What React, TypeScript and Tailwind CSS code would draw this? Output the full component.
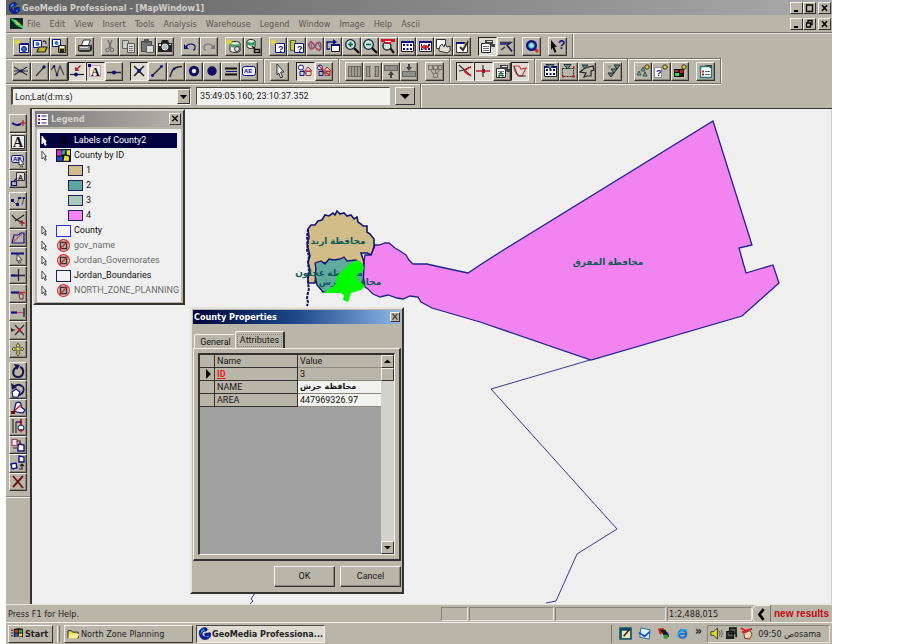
import React from "react";

const NAVY = "#101080";

function line(d: string, stroke = "#333", width = 1.2, fill = "none") {
  return <path d={d} stroke={stroke} strokeWidth={width} fill={fill} />;
}
function fill(d: string, color = "#333") {
  return <path d={d} fill={color} />;
}
const star = fill("M1 1l2 2 0-3 1 3 3-1-2 2 2 2-3-1-1 3-1-3-2 1 1-2z", "#e8dc20");
const page = line("M5.5 5.5h9v9h-9z", NAVY, 1, "#fff");
const gridBox = (
  <>
    {line("M2.5 3.5h12v10h-12z", "#222", 1, "#fff")}
    {fill("M2 3h13v2H2z", NAVY)}
    {fill("M4 6h2v2H4zM7.500 6h2v2h-2zM11 6h2v2h-2zM4 10h2v2H4zM7.500 10h2v2h-2zM11 10h2v2h-2z", NAVY)}
  </>
);
const lens = (
  <>
    {line("M10 10l5 5", "#111", 2.4)}
    <circle cx="6.500" cy="6.500" r="4.800" fill="#cfe6df" stroke="#123" strokeWidth="1.300" />
  </>
);
const bars = line("M2.500 3.500h12v10h-12zM5.500 3v11M8.500 3v11M11.500 3v11", "#6b6961", 1.2, "#a5a298");
const sheet = (
  <>
    {line("M2.500 5.500h9v9h-9z", "#222", 1, "#fff")}
    {fill("M6 2h8v4h2v3h-3l-3-3H6z", "#444")}
    {line("M8 3.500h5", "#ddd", 1)}
    {line("M4 8.500h6M4 10.500h6M4 12.500h6", "#777", 1)}
  </>
);
const shapes = (
  <>
    <circle cx="4" cy="4.500" r="2.500" fill="#fff" stroke={NAVY} />
    {line("M6 7l3 4M3 8.500h4v4H3z", NAVY, 1)}
    {line("M7.500 8l3.500-4 4 4z", "#a33", 1, "#ecd")}
    {line("M9 8.500h5v4H9z", "#a33", 1)}
  </>
);
const tri = "M2 2.500h5l-2.500 4z";

const icons: Record<string, React.ReactNode> = {
  "New workspace": <>{page}{fill("M5 5h10v2H5z", NAVY)}{star}<circle cx="10" cy="11" r="2.500" fill="#2d6fd0" stroke="#111a90" /></>,
  "Open workspace": <>{line("M1.500 2.500h8v7h-8z", NAVY, 1, "#fff")}<circle cx="5.500" cy="6" r="2" fill="#2d6fd0" />{fill("M5 14l2-5h9l-2 5z", "#c3b51b")}{line("M5 14l2-5h8l-2 5zM11 4c2-2 3-1 3 2", "#222")}</>,
  "Save workspace": <>{line("M1.500 1.500h8v7h-8z", NAVY, 1, "#fff")}<circle cx="5.500" cy="5" r="2" fill="#2d6fd0" />{line("M7.500 7.500h7v7h-7z", "#222", 1, "#a79a20")}{fill("M9 11h4v3H9z", "#222")}{fill("M9 8h4v2H9z", "#eee")}</>,
  Print: <>{line("M4.500 7l2-5h7l-2 5", "#333", 1, "#fff")}{line("M1.500 7.500h12v5h-12z", "#222", 1, "#888")}{fill("M3 12h11l-1 2H2z", "#333")}{fill("M14 6l1 1v5l-1 1z", "#333")}{line("M3 9.500h8", "#ddd", 1)}</>,
  Cut: <>{line("M6 2l3 8M10 2l-3 8", "#666", 1.100)}<circle cx="5.500" cy="12" r="1.800" fill="none" stroke="#666" /><circle cx="10" cy="12" r="1.800" fill="none" stroke="#666" /></>,
  Copy: <>{line("M2.500 2.500h6v8h-6z", "#666", 1, "#ccc")}{line("M7.500 5.500h7v9h-7z", "#555", 1, "#ddd")}{line("M9 8.500h4M9 10.500h4M9 12.500h4", "#777", 1)}</>,
  Paste: <>{line("M2.500 3.500h10v10h-10z", "#444", 1, "#777")}{fill("M5 1h5v4H5z", "#555")}{line("M7.500 7.500h7v7h-7z", "#555", 1, "#ddd")}</>,
  Snapshot: <>{fill("M1 5h3l1-3h6l1 3h3v9H1z", "#222")}<circle cx="8" cy="9" r="3" fill="#9fc5c5" stroke="#eee" />{fill("M2 6h2v2H2zM12 6h2v1h-2z", "#ddd")}</>,
  Undo: <>{line("M4 9c3-5 10-3 9 1 0 1-1 2-2 2", NAVY, 1.200)}{fill("M2 6v5h5z", NAVY)}</>,
  Redo: <>{line("M12 9C9 4 2 6 3 10c0 1 1 2 2 2", "#777", 1.200)}{fill("M14 6v5H9z", "#777")}</>,
  "New connection": <>{line("M4 5v8c2 2 9 2 10 0V5c-2-2-8-2-10 0z", "#222", 1, "#e9efe4")}{fill("M4 5c2 2 8 2 10 0v3c-2 2-8 2-10 0z", "#48a070")}{star}<circle cx="11" cy="11" r="2.500" fill="#ddd" stroke="#333" /></>,
  "Edit connection": <>{line("M2 3v6c2 2 7 2 8 0V3C8 1 4 1 2 3z", "#222", 1, "#e9efe4")}{fill("M2 3c2 2 6 2 8 0v3c-2 2-6 2-8 0z", "#2f9a67")}{line("M7 8l3 3M9.500 11.500h5v3h-5z", "#111", 1.500, "#bbb")}</>,
  "New query": <>{page}{star}<text x="8" y="14" fontSize="9" fontWeight="700" fill={NAVY}>?</text></>,
  "Edit query": <>{line("M1.500 2.500h5v10h-5z", "#487020", 1.200, "#cfc84a")}{page}<text x="8" y="14" fontSize="9" fontWeight="700" fill={NAVY}>?</text></>,
  Relate: <>{line("M8 8C4 2 1 5 2 8s3 5 6 0 6-5 6 0-3 6-6 0zM3 3l4 3M9 10l4 3", "#a04468", 1.500)}{line("M4 6l1 4M11 5l2 4", "#557", 1)}</>,
  "Copy window": <>{line("M6.500 6.500h8v7h-8z", "#111", 1, "#fff")}{fill("M6 6h9v2H6z", NAVY)}{line("M5 11H2V4h8", NAVY, 1.300)}{fill("M8 1l4 3-4 3z", NAVY)}</>,
  "Zoom in": <>{lens}{line("M6.500 4v5M4 6.500h5", "#0b6055", 1.600)}</>,
  "Zoom out": <>{lens}{line("M4 6.500h5", "#0b6055", 1.600)}</>,
  "Zoom to rectangle": <>{line("M10 10l4 5", "#111", 2.200)}<circle cx="7" cy="8" r="4" fill="#cfe6df" stroke="#123" strokeWidth="1.300" />{fill("M1 1h14v3h-4v2H5V4H1z", "#d31526")}{line("M5 3.500h6", "#fff", 1)}</>,
  "Fit all": gridBox,
  "Fit selected": <>{gridBox}{fill("M5 6h6v5H5z", "#fff")}{fill("M6 7h4v1h2v2h-2v1H6v-1H4V8h2z", "#e01e2b")}</>,
  Pan: <>{line("M1.500 1.500h9v9h-9z", "#333", 1, "#fff")}{line("M4 13c0-3 1-6 3-7l2 3 1-3 2 3 3-1v5l-3 2z", "#333", 1, "#e3e0d6")}</>,
  "Display scale": <>{line("M2.500 4.500h11v10h-11z", "#333", 1, "#fff")}{fill("M2 4h12v2H2z", NAVY)}{line("M6 9l3 3 5-9", "#333", 2)}{line("M8 10l5-7", "#d8d23a", 1)}</>,
  "Legend window": sheet,
  "North arrow": <>{line("M2 4.500h11l-4 3 5 6M3 12l4-3", "#333", 1.400)}{line("M2 6h9", NAVY, 1.400)}{line("M10 8l4 5", NAVY, 1.200)}</>,
  "Web search": <>{line("M10 10l4 4", "#e02525", 3)}<circle cx="7.500" cy="7.500" r="5.500" fill={NAVY} /><circle cx="7.500" cy="7.500" r="3" fill="#9be0e0" stroke="#187a9a" /></>,
  "Context help": <>{fill("M1 2l6 7H4.500l2 5-2 .7-2-4.700-1.500 2z", "#111")}<text x="8" y="11" fontSize="12" fontWeight="700" fill={NAVY}>?</text></>,

  "Snap to intersection": <>{line("M1 4l13 8M1 12l13-8M1 8h14", "#333", 1.100)}<circle cx="8" cy="8" r="1.600" fill={NAVY} /></>,
  "Snap to end": <>{line("M4 13l8-9", "#333")}<circle cx="12" cy="4" r="1.700" fill={NAVY} /></>,
  "Snap to vertex": <>{line("M1 7l3-4 3 9 3-9 4 9", "#444")}<circle cx="4" cy="3.500" r="1.300" fill={NAVY} /><circle cx="7" cy="12" r="1.300" fill={NAVY} /></>,
  "Snap to element": <>{line("M1 11.500h14", "#222")}<circle cx="7" cy="11.500" r="2" fill={NAVY} />{fill("M6 8V4l2 1 3-3 1 1-3 3 1 2z", "#b8202b")}</>,
  "Snap to text": <>{line("M2.500 2.500h11v11h-11z", "#c9a", 1, "#f2e7e4")}<text x="4" y="13" fontSize="12" fontWeight="700" fontFamily="Liberation Serif" fill="#111">A</text>{fill("M1 1h3v3H1z", NAVY)}</>,
  "Snap to midpoint": <>{line("M1 9.500h14", "#222", 1.500)}<circle cx="8" cy="9.500" r="2" fill={NAVY} /></>,
  "Insert point": <>{line("M3 3l10 10M13 3L3 13", "#222", 1.600)}<circle cx="8" cy="8" r="2" fill={NAVY} /></>,
  "Insert line": <>{line("M3 13l9-9", "#222", 1.400)}<circle cx="3.500" cy="12.500" r="1.400" fill={NAVY} /><circle cx="12.500" cy="3.500" r="1.400" fill={NAVY} /></>,
  "Insert arc": <>{line("M2 14C4 6 6 4 14 3.500", "#222", 1.500)}<circle cx="6" cy="6" r="1.300" fill={NAVY} /></>,
  "Insert hole": <circle cx="8" cy="8" r="3.700" fill="#e6e6ee" stroke="#101060" strokeWidth="3" />,
  "Insert area": <circle cx="8" cy="8" r="4.700" fill="#101060" />,
  "Insert parallel": <>{line("M2 5.500h12M2 11.500h12", "#111", 2.200)}{line("M3 8.500h11", NAVY, 1)}</>,
  "Insert label": <><rect x="1.500" y="3.500" width="13" height="9" rx="2" fill="#eef" stroke={NAVY} /><text x="3" y="10" fontSize="6" fontWeight="700" fill={NAVY}>AE</text></>,
  "Select tool": <path d="M5 1l7 8H8.700l2 5-2 .9-2-5L5 12z" fill="#eee" stroke="#333" />,
  "Select by shape": shapes,
  "Select inside": <>{shapes}{line("M3 3l4 4M9 9l5 3", "#b22", 1.300)}</>,
  "Merge columns": bars,
  "Split columns": <>{bars}{fill("M7 2h3v13H7z", "#bab5a9")}</>,
  "Move down": <>{fill("M1 2h14v6H1z", "#66645d")}{line("M2 4h12M2 6h12", "#bbb", 1)}{fill("M8 8l3 4H9v3H7v-3H5z", "#444")}</>,
  "Move up": <>{fill("M1 8h14v6H1z", "#66645d")}{line("M2 10h12M2 12h12", "#bbb", 1)}{fill("M7 1h2v3h2L8 8 5 4h2z", "#444")}</>,
  Combine: <>{line("M1.500 2.500h4v4h-4zM6.500 2.500h4v4h-4zM11.500 2.500h3v4h-3zM6.500 10.500h4v4h-4zM3.500 7l3 4M12.500 7l-3 4M8.500 7v3", "#77756d", 1.100)}</>,
  "Break line": <>{line("M2 2l12 11M2 8c5 0 8-3 12-4", "#333", 1.200)}{line("M14 4c-4 1-7 4-6 5s4 3 6 3", "#d31526", 1.600)}</>,
  Intersect: <>{line("M1 8h14", "#c01020", 1.400)}{line("M8 2v12", "#333", 1.200)}{fill("M7 6h3v4H7z", "#a01030")}</>,
  "Legend properties": <>{sheet}<text x="4" y="14" fontSize="8" fontWeight="700" fill="#116a44">A</text></>,
  Coincident: <>{line("M2 3h5l2 3 5-1-4 8H6L3 8z", "#d33540", 1.200)}{line("M2 3l3 8 3 2h6", "#333", 1)}</>,
  "Fit view": <>{gridBox}{line("M4 1.500h8L8 6z", "#234", 1, "#6b8478")}</>,
  "Place fence": <><path d="M2.500 5.500h11v8h-11z" fill="none" stroke="#222" strokeDasharray="2 1" />{line("M2 13.500h2M13 4.500h2M12 13.500h3", "#d31526", 2)}{line("M4 1.500h7L7.500 6z", "#234", 1, "#6b8478")}</>,
  "Place polygon": <>{line("M1 9l5-4 8-2 1 4-3 1v5H8l-3 1 2-4z", "#222")}{line("M3 2h6L6 6z", "#234", 1, "#6b8478")}</>,
  "Filter set": <>{fill(tri, "#8d9a92")}{line("M9 2h6l-3 4zM6 6h6l-3 4zM3 10h6l-3 4z", "#223", 1, "#6b8478")}</>,
  "Add points": <>{line("M2 12l2-4 2 4zM8 13l2-4 2 4zM6 8l2-4 2 4z", "#265843", 1, "#8aa")}<circle cx="12" cy="4" r="2.200" fill="#d8cc20" stroke="#333" /></>,
  "Add query": <>{line("M1.500 4.500h7v10h-7z", "#88a", 1, "#fff")}<text x="3" y="13" fontSize="9" fontWeight="700" fill={NAVY}>?</text><circle cx="12" cy="4" r="2.200" fill="#d8cc20" stroke="#333" /></>,
  "Add thematic": <>{fill("M2 6h10v8H2z", "#111")}{fill("M3 10h4v3H3z", "#30e040")}{fill("M8 7h3v3H8z", "#d31526")}{fill("M3 7h3v2H3z", "#a33")}<circle cx="12" cy="4" r="2.200" fill="#d8cc20" stroke="#333" /></>,
  "Data window": <>{line("M2.500 3.500h11v11h-11z", "#1d7d7d", 1.400, "#fff")}{fill("M6 2h8v4l-3-2z", "#444")}{line("M4 8.500h2M4 11.500h2", "#d31526", 2)}{line("M7 8.500h5M7 11.500h5", "#666", 1)}</>,

  "Redigitize": <>{line("M2 8c4 3 7 2 9 1", NAVY, 2)}{line("M13 5v6M10 8h6", "#b01525", 1.200)}</>,
  "Text mode": <>{line("M1.500 1.500h13v13h-13z", "#333", 1, "#eee")}<text x="3" y="13" fontSize="14" fontWeight="700" fontFamily="Liberation Serif" fill="#111">A</text></>,
  "Label mode": <><rect x="1.500" y="3.500" width="12" height="7" rx="2" fill="#dde" stroke={NAVY} /><text x="3" y="9" fontSize="6" fontWeight="700" fill={NAVY}>AB</text><path d="M9 6l5 6h-2.500l1 3h-2l-.5-3-1 1z" fill="#fff" stroke="#222" strokeWidth=".8" /></>,
  "Leader label": <>{line("M6.500 1.500h8v8h-8z", "#333", 1, "#ddd")}<text x="8" y="8.500" fontSize="7" fontWeight="700" fill="#222">A</text>{line("M1.500 10.500h5v4h-5zM4 10l3-3", NAVY, 1.200)}</>,
  "Edit geometry": <>{line("M2 7l5 5 2-7h5l-2 7", "#555", 1)}{fill("M1 6h3v3H1zM6 10h3v3H6zM8 4h3v2H8zM13 4h2v2h-2z", NAVY)}</>,
  "Continue geometry": <>{line("M2 3c2 4 6 6 12 8M14 3L5 9", "#222", 1.300)}{line("M12 8v6M9 11h6", "#b01525", 1.200)}</>,
  "Reshape": <>{line("M2 13l2-8h4l3-2h3v10z", NAVY, 1.200)}{line("M3 12l9-8", "#c46080", 1.600)}</>,
  "Move vertex": <>{line("M1 4.500h13", NAVY, 2)}<path d="M7 5l5 6H9.500l1 3h-2l-.5-3-1 1z" fill="#eee" stroke="#222" strokeWidth=".8" /></>,
  "Split": <>{line("M1 8.500h14M8.500 2v12", "#223", 1.300)}{line("M1 8.500h6", NAVY, 2)}</>,
  "Trim": <>{line("M1 7.500h8", NAVY, 2.200)}{line("M9 7.500h6", "#c02030", 1.500)}<path d="M9 9h4v5h-3z" fill="#dcc" stroke="#622" /></>,
  "Extend": <>{line("M1 8.500h6", NAVY, 2.200)}{line("M7 8.500h6", "#c05060", 1.200)}{line("M14 4v9", "#222", 1.400)}</>,
  "Break": <>{line("M5 3l9 10M14 3L5 13M1 8h4", "#333", 1.200)}<circle cx="9.500" cy="8" r="1.800" fill="#d31526" />{fill("M1 6l3 2-3 2z", "#222")}</>,
  "Move": <path d="M8 2l2 3H9v2h3V6l2 2-2 2V9H9v3h1l-2 3-2-3h1V9H4v1L2 8l2-2v1h3V5H6z" fill="#e4de4c" stroke="#444" strokeWidth=".9" />,
  "Rotate": <>{line("M10 4c5 2 4 10-2 10-6 0-6-7-2-9.500", "#161650", 2)}{fill("M4 1l6 1-3 5z", "#161650")}</>,
  "Spin": <>{line("M4 5c5-5 12 0 9 5-1 2-3 3-5 3", "#161650", 1.800)}{fill("M1 1l1 7 5-3z", "#161650")}{line("M2 10l4-3 4 3-2 5H3z", NAVY, 1.200, "#fff")}</>,
  "Delete part": <>{line("M4 11l2-8c4-2 6 0 5 4l4 3-2 3-6-1z", NAVY, 1.200, "#eef")}{line("M3 12l8-7", "#d31526", 1.400)}{fill("M1 11h4v3H1z", "#611")}</>,
  "Align": <>{line("M3 1v14M6 4v11", "#333", 1.200)}{line("M11 1v9", "#c01525", 2)}{line("M6 4h5", NAVY, 1.200)}<circle cx="11" cy="10" r="3" fill="#dfe" stroke={NAVY} />{fill("M9 11h4l-2 4z", "#b22")}</>,
  "Copy geometry": <>{line("M2 2.500h5v6H2z", "#946", 1.200, "#fde")}{line("M9 7l5 1v6H8V9z", NAVY, 1.400, "#fff")}{line("M7 4h3v3M3 11h4", "#222", 1.200)}</>,
  "Paste geometry": <>{line("M9 1l5 1v5H9zM1 9l5-1 1 5-5 1z", NAVY, 1.400, "#fff")}{line("M9 14h3v-4M10 11l2-2 2 2", "#222", 1.200)}</>,
  "Delete": line("M3 2l10 12M13 2L3 13", "#6e1418", 1.900),
};

const bevel = "border border-t-[#f4f2ec] border-l-[#f4f2ec] border-r-[#33322e] border-b-[#33322e]";
const sunken = "border border-t-[#4a4943] border-l-[#4a4943] border-r-[#f4f2ec] border-b-[#f4f2ec]";
const ui = "font-['DejaVu_Sans_Condensed','DejaVu_Sans',sans-serif]";
const narrow = "font-['Roboto','Liberation_Sans',sans-serif]";

const pressed = new Set(["Snap to element", "Snap to text", "Insert point", "Legend window", "Select by shape", "Break line", "Intersect", "Coincident"]);

function ToolButton({ name, tall = false }: { name: string; tall?: boolean }) {
  const isPressed = pressed.has(name);
  const look = isPressed
    ? "border border-t-[#22211e] border-l-[#22211e] border-r-[#f4f2ec] border-b-[#f4f2ec] bg-[#dedbd3]"
    : `${bevel} shadow-[inset_-1px_-1px_0_#8b877d]`;
  return (
    <button type="button" aria-label={name} className={`flex min-h-0 min-w-0 flex-1 items-center justify-center overflow-hidden ${tall ? "w-[18px]" : "h-[19px]"} ${look}`}>
      <svg viewBox="0 0 16 16" className="size-[16px] shrink-0" fontFamily="Liberation Sans">{icons[name]}</svg>
    </button>
  );
}

type Group = { width: string; items: string[] };

function Band({ groups, first = false }: { groups: Group[]; first?: boolean }) {
  return (
    <div className={`flex items-center gap-[7px] border-r border-r-[#716e66] pr-[5px] shadow-[1px_0_0_#f4f2ec] ${first ? "pl-[7px]" : "pl-[6px]"}`}>
      {groups.map((g) => (
        <div key={g.items[0]} className={`flex ${g.width}`}>
          {g.items.map((n) => <ToolButton key={n} name={n} />)}
        </div>
      ))}
    </div>
  );
}

const standard: Group[] = [
  { width: "w-[55px]", items: ["New workspace", "Open workspace", "Save workspace"] },
  { width: "w-[19px]", items: ["Print"] },
  { width: "w-[73px]", items: ["Cut", "Copy", "Paste", "Snapshot"] },
  { width: "w-[37px]", items: ["Undo", "Redo"] },
  { width: "w-[37px]", items: ["New connection", "Edit connection"] },
  { width: "w-[202px]", items: ["New query", "Edit query", "Relate", "Copy window", "Zoom in", "Zoom out", "Zoom to rectangle", "Fit all", "Fit selected", "Pan", "Display scale"] },
  { width: "w-[37px]", items: ["Legend window", "North arrow"] },
  { width: "w-[19px]", items: ["Web search"] },
  { width: "w-[19px]", items: ["Context help"] },
];

const bands: Group[][] = [
  [
    { width: "w-[111px]", items: ["Snap to intersection", "Snap to end", "Snap to vertex", "Snap to element", "Snap to text", "Snap to midpoint"] },
    { width: "w-[128px]", items: ["Insert point", "Insert line", "Insert arc", "Insert hole", "Insert area", "Insert parallel", "Insert label"] },
  ],
  [
    { width: "w-[19px]", items: ["Select tool"] },
    { width: "w-[37px]", items: ["Select by shape", "Select inside"] },
  ],
  [
    { width: "w-[73px]", items: ["Merge columns", "Split columns", "Move down", "Move up"] },
    { width: "w-[19px]", items: ["Combine"] },
  ],
  [{ width: "w-[73px]", items: ["Break line", "Intersect", "Legend properties", "Coincident"] }],
  [
    { width: "w-[55px]", items: ["Fit view", "Place fence", "Place polygon"] },
    { width: "w-[19px]", items: ["Filter set"] },
  ],
  [
    { width: "w-[55px]", items: ["Add points", "Add query", "Add thematic"] },
    { width: "w-[19px]", items: ["Data window"] },
  ],
];

const menus = ["File", "Edit", "View", "Insert", "Tools", "Analysis", "Warehouse", "Legend", "Window", "Image", "Help", "Ascii"];

function WindowButtons({ restore = false }: { restore?: boolean }) {
  const cls = `h-[12px] w-[13px] bg-[#bab5a9] ${bevel}`;
  return (
    <div className="ml-auto flex pr-[1px]">
      <button type="button" aria-label="Minimize" className={cls}><svg viewBox="0 0 11 10">{fill("M3 7h4v2H3z", "#000")}</svg></button>
      <button type="button" aria-label={restore ? "Restore" : "Maximize"} className={cls}>
        <svg viewBox="0 0 11 10">{restore ? line("M4 3.500V1.500h4v4H6.500M2.500 4h4v4h-4z", "#000", 1.300) : line("M2.500 2h6v6.500h-6zM2 2h7", "#000", 1.300)}</svg>
      </button>
      <button type="button" aria-label="Close" className={`ml-[2px] ${cls}`}><svg viewBox="0 0 11 10">{line("M3 2l5 6M8 2L3 8", "#000", 1.500)}</svg></button>
    </div>
  );
}

function GeoLogo({ className }: { className: string }) {
  return (
    <svg viewBox="0 0 16 16" className={className} aria-hidden="true">
      <path d="M10 1C4 0 0 5 2 10c1 5 7 7 11 4 3-2 3-5 2-7l-7 1 1 3h2c-2 2-5 1-6-2 0-3 2-4 5-4l2-2z" fill="#0d1bb8" stroke="#06083f" strokeWidth=".8" />
      <path d="M4 4l3-2 1 2-3 2-2 4zM10 12l3-2v3z" fill="#28a4e8" />
    </svg>
  );
}

const verticalTools = [
  { height: "h-[74px]", items: ["Redigitize", "Text mode", "Label mode", "Leader label"] },
  { height: "h-[166px]", items: ["Edit geometry", "Continue geometry", "Reshape", "Move vertex", "Split", "Trim", "Extend", "Break", "Move"] },
  { height: "h-[129px]", items: ["Rotate", "Spin", "Delete part", "Align", "Copy geometry", "Paste geometry", "Delete"] },
];

function MapCanvas() {
  const label = { fill: "#0d5a56", fontSize: 9, fontWeight: 700, fontFamily: "'Liberation Sans','DejaVu Sans',sans-serif", textAnchor: "middle" as const };
  return (
    <svg viewBox="32 109 800 495" className="absolute top-0 left-0 h-[495px] w-[800px]" role="img" aria-label="Map of Jordan counties">
      <g fill="none" stroke="#3a3a90" strokeWidth="1">
        <path d="M590 360L491 389 617 529 577 554 556 601 546 603" />
        <path d="M255 593L251 599 253 601 250 604" />
      </g>
      <path d="M374 245L379 245 385 243 389 243 395 248 400 251 406 255 409 260 413 264 427 264 440 267 468 273 480 265 505 249 713 121 752 245 739 248 746 273 773 265 779 283 742 316 591 360 480 322 432 308 421 302 418 297 410 296 403 299 397 298 388 295 380 297 373 294 368 289 365 287 363 275 364 262 365 255 370 255 374 248Z" fill="#f184f1" stroke="#22228c" strokeWidth="1.300" />
      <path d="M308 229L311 225 315 225 318 221 322 220 325 215 329 216 333 213 335 215 337 211 340 214 344 213 347 216 351 215 354 219 357 217 358 222 361 224 363 226 367 226 367 232 370 234 374 239 374 247 371 255 367 253 361 253 364 262 363 270 346 272 330 262 316 264 316 274 315 283 308 283 308 278 310 270 308 262 310 256 308 248 307 243 309 238Z" fill="#d2bd88" stroke="#151570" strokeWidth="1.600" />
      <path d="M315 263L321 261 325 264 329 259 334 260 340 259 344 257 347 261 356 260 364 266 363 285 350 292 323 292 317 285 315 275 316 269Z" fill="#61aaa2" stroke="#151570" strokeWidth="1.300" />
      <path d="M308 229l-1 8 1 6-1 7 2 6-1 7 1 7-1 7 0 7 1 4-1 5-1 5 1 4-1 4" fill="none" stroke="#151570" strokeWidth="2" strokeDasharray="3 1" />
      <g {...label}>
        <text x="338" y="244">محافظة اربد</text>
        <text x="329" y="276">محافظة عجلون</text>
        <text x="350" y="285">محافظة جرش</text>
        <text x="608" y="265">محافظة المفرق</text>
      </g>
      <path d="M323 293L335 285 337 276 348 265 357 260 363 264 364 269 357 275 358 280 365 286 361 290 351 293 348 302 343 300 344 295 340 293Z" fill="#00fb00" />
    </svg>
  );
}

type Row = { text: string; kind: "labels" | "theme" | "blue" | "navy" | "hidden" | "swatch"; color?: string };
const legend: Row[] = [
  { text: "Labels of County2", kind: "labels" },
  { text: "County by ID", kind: "theme" },
  { text: "1", kind: "swatch", color: "bg-[#d2bd88]" },
  { text: "2", kind: "swatch", color: "bg-[#5aa79d]" },
  { text: "3", kind: "swatch", color: "bg-[#a9cbbd]" },
  { text: "4", kind: "swatch", color: "bg-[#f184f1]" },
  { text: "County", kind: "blue" },
  { text: "gov_name", kind: "hidden" },
  { text: "Jordan_Governorates", kind: "hidden" },
  { text: "Jordan_Boundaries", kind: "navy" },
  { text: "NORTH_ZONE_PLANNING", kind: "hidden" },
];

function LegendSymbol({ kind }: { kind: Row["kind"] }) {
  if (kind === "blue") return <span className="h-[12px] w-[15px] shrink-0 border border-[#2a2ae0] bg-[#f6f6fc]" />;
  if (kind === "navy") return <span className="h-[12px] w-[15px] shrink-0 border border-[#20205c] bg-[#f4f4f6]" />;
  return (
    <svg viewBox="0 0 14 12" className="h-[13px] w-[15px] shrink-0 overflow-visible">
      {kind === "labels" && line("M3 11l4-9 4 9M4.500 8h5", "#000", 1.200)}
      {kind === "theme" && (
        <>
          {fill("M0 0h14v12H0z", "#111")}
          {fill("M1 1h4v5H1z", "#e32bc0")}{fill("M6 1h3l-1 4H5z", "#19b0b0")}{fill("M10 1h3v5l-3-1z", "#f0e428")}
          {fill("M1 7h5v4H1z", "#2740e0")}{fill("M8 6l4 1v4H7z", "#f0e428")}
        </>
      )}
      {kind === "hidden" && (
        <>
          {line("M4 3h6v6H4z", "#333", 1.300, "#aaa")}
          <circle cx="7" cy="6" r="5.500" fill="none" stroke="#e02020" strokeWidth="1.100" />
          {line("M3.500 9.500l7-7", "#e02020", 1.100)}
        </>
      )}
    </svg>
  );
}

function LegendWindow() {
  return (
    <section aria-label="Legend" className={`absolute top-0 left-[1px] w-[152px] border-2 border-t-[#d9d6cd] border-l-[#d9d6cd] border-r-[#33322e] border-b-[#33322e] bg-[#bab5a9] text-[9px] leading-[15px] ${narrow}`}>
      <header className="flex h-[16px] items-center bg-linear-to-r from-[#7b7b7b] to-[#b5b3ad] px-[2px]">
        <svg viewBox="0 0 11 11" className="mr-[3px] size-[11px]">
          {fill("M0 0h11v11H0z", "#fff")}{fill("M1 1h2v2H1zM1 8h2v2H1z", "#22c")}{fill("M1 4.500h2v2H1z", "#d22")}{line("M4.500 2h5M4.500 5.500h5M4.500 9h5", "#226", 1.200)}
        </svg>
        <h2 className={`${ui} text-[9px] font-bold text-[#d5d3cd]`}>Legend</h2>
        <button type="button" aria-label="Close legend" className={`ml-auto h-[12px] w-[12px] bg-[#bab5a9] ${bevel}`}><svg viewBox="0 0 11 10">{line("M2.500 2l6 6M8.500 2l-6 6", "#000", 1.400)}</svg></button>
      </header>
      <ul className="mx-[2px] mt-[2px] mb-[1px] bg-[#efefef] pt-[4px] pr-[4px] pb-[4px] pl-[3px]">
        {legend.map((r) =>
          r.kind === "swatch" ? (
            <li key={r.text} className="flex h-[15px] items-center gap-[3px] pl-[28px] text-[#111]">
              <span className={`h-[11px] w-[15px] border border-[#20205c] ${r.color}`} />{r.text}
            </li>
          ) : (
            <li key={r.text} className={`flex h-[15px] items-center pl-[1px] ${r.kind === "labels" ? "bg-[#020242] text-white" : r.kind === "hidden" ? "text-[#6c6c6c]" : "text-[#111]"}`}>
              <svg viewBox="0 0 8 12" className="mr-[8px] h-[11px] w-[7px] shrink-0">
                <path d="M1 1l5 6H4.500l1.500 4-1.500.5L3 8 1 10z" fill={r.kind === "labels" ? "#fff" : "#eee"} stroke={r.kind === "labels" ? "#fff" : "#222"} strokeWidth=".9" />
              </svg>
              <LegendSymbol kind={r.kind} />
              <span className="ml-[3px] whitespace-nowrap">{r.text}</span>
            </li>
          )
        )}
      </ul>
    </section>
  );
}

function PropertiesDialog() {
  const name = "border-r border-b border-[#33322e] pl-[2px] text-left font-normal";
  const value = "border-b border-[#8b887f] pl-[2px] text-left font-normal";
  const handle = "border-r border-b border-[#33322e]";
  const dialogButton = `h-[21px] w-[61px] ${bevel} shadow-[inset_-1px_-1px_0_#8b877d]`;
  return (
    <section role="dialog" aria-label="County Properties" className={`absolute top-[198px] left-[158px] flex h-[287px] w-[214px] flex-col border-2 border-t-[#e6e3db] border-l-[#e6e3db] border-r-[#33322e] border-b-[#33322e] bg-[#bab5a9] p-[1px] text-[9px] leading-[12px] text-[#151515] ${narrow}`}>
      <header className="flex h-[14px] items-center bg-linear-to-r from-[#04043c] via-[#1d4a8c] to-[#8ebbe8] pr-[1px] pl-[1px]">
        <h2 className={`${ui} text-[9px] font-bold text-white`}>County Properties</h2>
        <button type="button" aria-label="Close dialog" className={`ml-auto h-[10px] w-[10px] bg-[#bab5a9] ${bevel}`}><svg viewBox="0 0 11 10">{line("M2 1l7 8M9 1L2 9", "#333", 1.600)}</svg></button>
      </header>
      <div role="tablist" className="flex h-[24px] items-end pl-[1px]">
        <button type="button" role="tab" aria-selected="false" className="h-[14px] w-[41px] rounded-t-[2px] border border-b-0 border-[#f4f2ec] border-r-transparent pl-[2px]">General</button>
        <button type="button" role="tab" aria-selected="true" className="flex h-[17px] w-[50px] items-center justify-center rounded-t-[2px] border border-r-2 border-b-0 border-t-[#f4f2ec] border-l-[#f4f2ec] border-r-[#33322e]"><span className="border border-dotted border-[#8b887f] px-[2px] leading-[11px]">Attributes</span></button>
      </div>
      <div className="flex h-[213px] border border-t-[#f4f2ec] border-l-[#f4f2ec] border-r-2 border-b-2 border-r-[#33322e] border-b-[#33322e] p-[4px]">
        <div className="flex w-full border border-t-2 border-l-2 border-t-[#33322e] border-l-[#33322e] border-r-[#f4f2ec] border-b-[#f4f2ec] bg-[#a1a1a1]">
          <div className="flex-1">
            <table className="w-full table-fixed border-separate border-spacing-0 bg-[#bab5a9]">
              <colgroup><col className="w-[15px]" /><col className="w-[83px]" /><col /></colgroup>
              <thead>
                <tr className="h-[13px]"><th className={handle} aria-label="Row marker" /><th className={name}>Name</th><th className={value}>Value</th></tr>
              </thead>
              <tbody>
                <tr className="h-[13px]">
                  <td className={handle}><svg viewBox="0 0 14 10" className="h-[10px] w-[14px]">{fill("M6 0l5 5-5 5z", "#000")}</svg></td>
                  <td className={`${name} font-bold text-[#e81c1c] underline`}><b>ID</b></td><td className={value}>3</td>
                </tr>
                <tr className="h-[13px]"><td className={handle} /><td className={name}>NAME</td><td className={`${value} bg-[#f2f2f0] font-['DejaVu_Sans',sans-serif] text-[8px]`}><b>محافظة جرش</b></td></tr>
                <tr className="h-[13px]"><td className={handle} /><td className={name}>AREA</td><td className={`${value} bg-[#f2f2f0]`}>447969326.97</td></tr>
              </tbody>
            </table>
          </div>
          <div className="flex w-[13px] flex-col bg-[#d3d1cb]">
            <button type="button" aria-label="Scroll up" className={`h-[13px] bg-[#bab5a9] ${bevel}`}><svg viewBox="0 0 11 11">{fill("M2 7h7L5.500 3.500z", "#000")}</svg></button>
            <span className={`h-[13px] bg-[#bab5a9] ${bevel}`} />
            <button type="button" aria-label="Scroll down" className={`mt-auto h-[13px] bg-[#bab5a9] ${bevel}`}><svg viewBox="0 0 11 11">{fill("M2 4h7L5.500 7.500z", "#000")}</svg></button>
          </div>
        </div>
      </div>
      <div className="flex flex-1 items-center justify-end gap-[5px]">
        <button type="button" className={dialogButton}>OK</button>
        <button type="button" className={dialogButton}>Cancel</button>
      </div>
    </section>
  );
}

const dim = "border border-t-[#85827a] border-l-[#85827a] border-r-[#e8e6df] border-b-[#e8e6df]";

export default function App() {
  return (
    <div className={`h-screen overflow-hidden bg-white pr-[70px] pl-[6px] ${ui} text-[9px] leading-[12px] text-[#222]`}>
      <div className="flex h-full flex-col bg-[#bab5a9]">
        <header className="flex h-[15px] shrink-0 items-center bg-linear-to-r from-[#626262] to-[#a9a9a9] pl-[2px]">
          <GeoLogo className="mr-[2px] size-[12px]" />
          <h1 className="font-bold text-[#d2d0ca]">GeoMedia Professional - [MapWindow1]</h1>
          <WindowButtons />
        </header>
        <div className="flex h-[18px] shrink-0 items-center border-b border-[#77746b] pl-[4px]">
          <svg viewBox="0 0 13 11" className="mr-[4px] h-[11px] w-[13px]" aria-hidden="true">
            {fill("M0 0h13v11H0z", "#0b2a24")}{fill("M0 0l6 2 7 6v3L6 7z", "#42c85a")}{fill("M4 2l6 4-2 1z", "#e3e23c")}{fill("M7 3l3 3-2-1z", "#d33")}
          </svg>
          <nav className="flex gap-[9px]">
            {menus.map((m) => <button type="button" key={m} className="text-[#595750]">{m}</button>)}
          </nav>
          <WindowButtons restore />
        </div>
        <div className="flex h-[25px] shrink-0 border-t border-t-[#e6e4dc]"><Band groups={standard} first /></div>
        <div className="flex h-[26px] shrink-0">
          <div className="flex border-t border-b border-t-[#77746b] border-b-[#77746b] shadow-[inset_0_1px_0_#f4f2ec,0_1px_0_#f4f2ec]">
            {bands.map((b, i) => <Band key={i} groups={b} />)}
          </div>
        </div>
        <div className={`flex h-[24px] shrink-0 ${narrow}`}>
          <div className="flex items-center border-r border-r-[#716e66] pr-[5px] pl-[5px] shadow-[1px_0_0_#f4f2ec]">
            <label className={`flex h-[18px] w-[180px] bg-[#f2f2f0] border-t-2 border-l-2 ${sunken}`}>
              <select aria-label="Coordinate format" className="min-w-0 flex-1 appearance-none pl-[2px]"><option>Lon;Lat(d:m:s)</option></select>
              <span className={`w-[13px] bg-[#bab5a9] ${bevel}`}><svg viewBox="0 0 11 14">{fill("M2 5h7L5.500 9z", "#000")}</svg></span>
            </label>
            <input aria-label="Coordinates" defaultValue="35:49:05.160; 23:10:37.352" className={`ml-[5px] h-[18px] w-[194px] bg-[#f2f2f0] pl-[3px] ${sunken}`} />
            <button type="button" aria-label="Coordinate options" className={`ml-[5px] h-[18px] w-[20px] ${bevel}`}><svg viewBox="0 0 18 16">{fill("M4 6h10l-5 5z", "#000")}</svg></button>
          </div>
        </div>

        <main className="flex min-h-0 flex-1">
          <aside className="flex w-[24px] shrink-0 flex-col">
            <div className="flex flex-col gap-[4px] border-b border-[#85827a] pt-[6px] pb-[5px] pl-[3px] shadow-[0_1px_0_#f4f2ec]">
              {verticalTools.map((g) => (
                <div key={g.height} className={`flex flex-col ${g.height}`}>
                  {g.items.map((n) => <ToolButton key={n} name={n} tall />)}
                </div>
              ))}
            </div>
          </aside>
          <div className="min-w-0 flex-1 border-t border-l-2 border-[#33322e]">
            <div className="relative h-full overflow-hidden border-r border-[#d3d0c6] bg-[#efefef]">
              <MapCanvas />
              <LegendWindow />
              <PropertiesDialog />
            </div>
          </div>
        </main>

        <footer className="flex h-[18px] shrink-0 items-center border-t border-[#e8e6df]">
          <span className="flex-1 pl-[2px]">Press F1 for Help.</span>
          <span className={`h-[14px] w-[27px] ${dim}`} />
          <span className={`ml-[1px] h-[14px] w-[85px] ${dim}`} />
          <span className={`ml-[1px] h-[14px] w-[111px] ${dim}`} />
          <span className={`ml-[1px] h-[14px] w-[85px] pl-[1px] ${dim}`}>1:2,488,015</span>
          <button type="button" aria-label="Previous" className="w-[18px] self-stretch rounded-l-[5px] border-t border-l border-[#f4f2ec]"><svg viewBox="0 0 16 16">{line("M10 3L6 8l4 5", "#000", 2.500)}</svg></button>
          <a href="#results" className="flex w-[62px] items-center justify-center self-stretch border-l border-[#77746b] font-['Liberation_Sans',sans-serif] text-[10px] font-bold whitespace-nowrap text-[#c00a12]">new results</a>
        </footer>

        <div className="flex h-[22px] shrink-0 items-center border-t border-[#f4f2ec] pr-[2px] pl-[2px]">
          <button type="button" className={`flex h-[18px] w-[45px] items-center gap-[2px] pl-[2px] font-bold ${bevel}`}>
            <svg viewBox="0 0 13 12" className="h-[11px] w-[12px]">
              {fill("M0 2h2v1H0zM0 5h2v1H0zM0 8h2v1H0z", "#222")}{fill("M3 1c3-1 9-1 10 0v9c-3-1-8-1-10 0z", "#111")}
              {fill("M4 2h3.500v3H4z", "#e0301e")}{fill("M8.500 2H12v3H8.500z", "#32b838")}{fill("M4 6h3.500v3H4z", "#2a4de0")}{fill("M8.500 6H12v3H8.500z", "#eada2a")}
            </svg>
            Start
          </button>
          <span className="mx-[4px] h-[16px] w-[3px] border-x border-l-[#f4f2ec] border-r-[#77746b]" />
          <button type="button" className={`flex h-[18px] w-[129px] items-center gap-[1px] pl-[2px] ${bevel}`}>
            <svg viewBox="0 0 14 12" className="h-[12px] w-[13px]">{line("M1 10.500V2.500h4l1 1.500h6v6.500z", "#222", 1, "#eadb55")}{fill("M1 11l2-5h10l-2 5z", "#f6ee9a")}</svg>
            North Zone Planning
          </button>
          <button type="button" className={`ml-[3px] flex h-[18px] w-[129px] items-center gap-[1px] bg-[#dedbd3] pl-[1px] font-bold whitespace-nowrap ${sunken}`}>
            <GeoLogo className="size-[13px] shrink-0" />
            GeoMedia Professiona...
          </button>
          <div className="ml-auto flex items-center gap-[6px] border-l border-l-[#77746b] pl-[7px]">
            <svg viewBox="0 0 14 14" className="size-[13px]">{line("M1 1h12v12H1z", "#156", 1.500, "#123c60")}{fill("M3 4h9v8H3z", "#eee6b8")}{line("M5 10l6-7", "#321", 1.600)}</svg>
            <svg viewBox="0 0 14 14" className="size-[13px]">{line("M3 1l10 2-1 10-10-2z", "#26a", 1, "#dfefff")}{line("M1 6l6 4 6-5", "#25c", 2)}</svg>
            <svg viewBox="0 0 14 14" className="size-[13px]">{fill("M1 2l6-1 2 5-6 2z", "#d3261e")}{fill("M6 5l6 1 1 4-5 2z", "#2349c8")}{fill("M3 3l3 4 3 5 4-2-4-7z", "#181818")}{fill("M8 8l4 1-1 4-4-1z", "#32a33a")}</svg>
            <svg viewBox="0 0 14 14" className="size-[13px]"><circle cx="7" cy="7.500" r="4" fill="none" stroke="#1877d2" strokeWidth="2.500" />{line("M3 7.500h8", "#1877d2", 2)}{line("M1 11C3 5 8 1 13 3", "#49aee9", 1.300)}</svg>
            <span className="pb-[6px] text-[12px] font-bold">»</span>
          </div>
          <div className={`ml-[5px] flex h-[18px] w-[123px] items-center gap-[2px] pl-[2px] ${dim}`}>
            <svg viewBox="0 0 14 14" className="size-[13px]">{line("M1 5h3l4-4v12L4 9H1z", "#333", 1, "#e8dc20")}{line("M10 4c1 2 1 4 0 6M12 3c2 3 1 6 0 8", "#555", 1)}</svg>
            <svg viewBox="0 0 14 14" className="size-[13px]">{line("M5 1h7v6H5zM2 5h7v6H2z", "#111", 1.500, "#555")}{fill("M1 11h9v2H1zM11 7h2v4h-2z", "#222")}</svg>
            <svg viewBox="0 0 14 14" className="size-[13px]">{line("M4 6l7-2 2 4-3 5-5-1z", "#7a2a20", 1, "#ecd9b0")}{line("M1 1l5 3 7-2M2 5l5 1", "#d8202a", 2)}</svg>
            <span className="ml-auto pr-[8px] whitespace-nowrap">09:50 صosama</span>
          </div>
        </div>
      </div>
    </div>
  );
}
